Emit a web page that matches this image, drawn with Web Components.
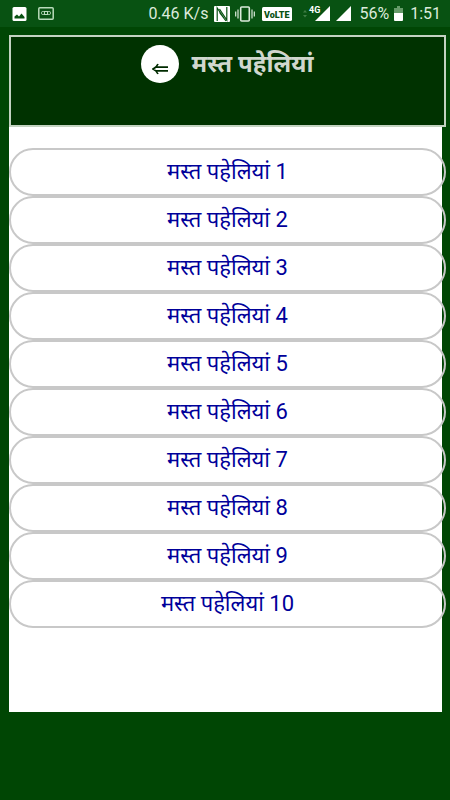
<!DOCTYPE html>
<html lang="hi">
<head>
<meta charset="utf-8">
<meta name="viewport" content="width=device-width, initial-scale=1">
<title>मस्त पहेलियां</title>
<style>
body { margin: 0; min-height: 100vh; background: #004604; font-family: Roboto, "Noto Sans Devanagari", "Noto Sans", sans-serif; }
</style>
</head>
<body>
<riddle-app></riddle-app>
<script>
class StatusBar extends HTMLElement {
  constructor() {
    super();
    this.attachShadow({ mode: 'open' }).innerHTML = `
<style>
:host { display: flex; align-items: center; justify-content: space-between; height: 27px; padding: 0 9px 0 12px; background: #085212; color: #dcebdc; font-size: 16px; line-height: 27px; white-space: nowrap; }
div { display: flex; align-items: center; }
svg { display: block; flex: none; }
.left { gap: 11px; }
.rate { margin-right: 6px; }
.nfc { margin-right: 5px; }
.vib { margin-right: 7px; }
.lte { margin-right: 11px; }
.sig { margin-right: 6px; }
.sig2 { margin-right: 8px; }
.pct { margin-right: 5px; }
.bat { margin-right: 7px; }
</style>
<div class="left">
<svg width="15" height="14" viewBox="0 0 15 14"><rect x=".5" width="14" height="14" rx="1.5" fill="#fff"/><path d="M2.500 11.500V9.500L5 7.500l2 2 2.500-3L12.500 10v1.500z" fill="#085212"/></svg>
<svg width="16" height="13" viewBox="0 0 16 13" fill="none" stroke="#b9dbbb"><rect x=".8" y=".8" width="14.400" height="11.400" rx="1" stroke-width="1.500"/><rect x="3.500" y="4.500" width="3" height="3" rx="1.200"/><rect x="6.500" y="4.500" width="3" height="3"/><rect x="9.500" y="4.500" width="3" height="3" rx="1.200"/></svg>
</div>
<div>
<span class="rate">0.46 K/s</span>
<svg class="nfc" width="16" height="16" viewBox="0 0 16 16"><rect width="16" height="16" rx="1" fill="#fff"/><path d="M3.200 15V2L10.500 13M12.800 1v13L5.500 3M5.500 6.500 12 15" fill="none" stroke="#085212" stroke-width="1.200"/></svg>
<svg class="vib" width="20" height="16" viewBox="0 0 20 16" fill="none" stroke="#dcebdc"><rect x="5.700" y="1" width="8.600" height="14" rx="1" stroke-width="1.600"/><path d="M3 3.500v9M.7 5.500v5M17 3.500v9M19.300 5.500v5" stroke-width="1.200"/></svg>
<svg class="lte" width="30" height="14" viewBox="0 0 30 14"><rect width="30" height="14" rx="1.500" fill="#fff"/><text x="2" y="10.500" font-family="Roboto, sans-serif" font-weight="900" font-size="9" fill="#085212">VoLTE</text></svg>
<svg class="sig" width="27" height="17" viewBox="0 0 27 17"><path d="M0 7.500 2 5l2 2.500zM0 10l2 2.500 2-2.500z" fill="#3f7d45"/><path d="M27 1v15H12z" fill="#fff"/><text x="6" y="8" font-family="Roboto, sans-serif" font-weight="700" font-size="9" fill="#fff" stroke="#085212" stroke-width="1" paint-order="stroke">4G</text></svg>
<svg class="sig2" width="15" height="15"><path d="M15 0v15H0z" fill="#fff"/></svg>
<span class="pct">56%</span>
<svg class="bat" width="9" height="15" viewBox="0 0 9 15"><path d="M3 0h3v2h3v5H0V2h3z" fill="#669b69"/><path d="M0 7h9v7q0 1-1 1H1q-1 0-1-1z" fill="#fff"/></svg>
<span>1:51</span>
</div>`;
  }
}
customElements.define('status-bar', StatusBar);

class PageHeader extends HTMLElement {
  constructor() {
    super();
    this.attachShadow({ mode: 'open' }).innerHTML = `
<style>
:host { display: flex; justify-content: center; align-items: flex-start; gap: 12px; box-sizing: border-box; height: 92px; padding: 8px 0 0; border: 2px solid #c3d2c1; background: #003200; color: #d0d7ce; }
button { width: 38px; height: 38px; padding: 9px 0 0; border: 0; border-radius: 50%; background: #fff; display: flex; align-items: center; justify-content: center; }
h1 { margin: 0; font-size: 24px; line-height: 38px; font-weight: 700; }
</style>
<button aria-label="वापस"><svg width="16" height="12" viewBox="0 0 16 12" fill="none" stroke="#002b00" stroke-width="1.700"><path d="M6 1Q4.500 4.500 1 6q3.500 1.500 5 5M4 4.200h12M4 7.800h12"/></svg></button>
<h1><slot></slot></h1>`;
  }
}
customElements.define('page-header', PageHeader);

class RiddleLink extends HTMLElement {
  constructor() {
    super();
    this.attachShadow({ mode: 'open' }).innerHTML = `
<style>
:host { display: block; }
a { display: block; box-sizing: border-box; height: 48px; border: 2px solid #c8c8c8; border-radius: 24px; color: #00009a; font-size: 22px; line-height: 44px; text-align: center; text-decoration: none; }
</style>
<a href="#"><slot></slot></a>`;
  }
}
customElements.define('riddle-link', RiddleLink);

class RiddleApp extends HTMLElement {
  constructor() {
    super();
    const links = Array.from({ length: 10 }, (_, i) => `<riddle-link>मस्त पहेलियां ${i + 1}</riddle-link>`).join('');
    this.attachShadow({ mode: 'open' }).innerHTML = `
<style>
:host { display: block; }
main { margin: 8px 8px 0 9px; padding-bottom: 84px; background: #fff; }
page-header, nav { margin-right: -4px; }
nav { padding-top: 21px; }
</style>
<status-bar></status-bar>
<main><page-header>मस्त पहेलियां</page-header><nav>${links}</nav></main>`;
  }
}
customElements.define('riddle-app', RiddleApp);
</script>
</body>
</html>
